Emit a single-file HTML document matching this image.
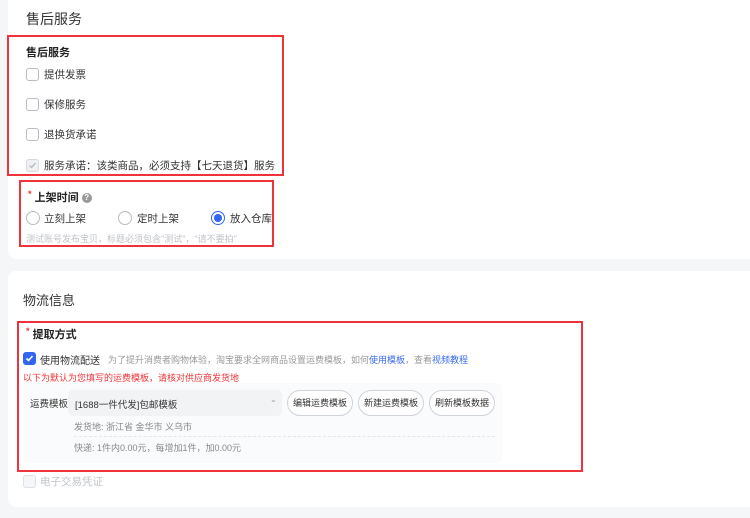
<!DOCTYPE html>
<html><head><meta charset="utf-8"><style>
*{margin:0;padding:0;box-sizing:border-box}
body{width:750px;height:518px;background:#f5f6f8;position:relative;overflow:hidden;font-family:"Liberation Sans","Noto Sans CJK SC",sans-serif;color:#333}
.a{position:absolute;white-space:nowrap}
.card{position:absolute;background:#fff;border-radius:8px}
.rb{position:absolute;border:2px solid #f0333a}
.cb{position:absolute;width:13px;height:13px;border:1px solid #b8bcc4;border-radius:3px;background:#fff}
.rd{position:absolute;width:14px;height:14px;border:1px solid #b8bcc4;border-radius:50%;background:#fff}
.t11{font-size:10.5px;color:#333}
.btn{position:absolute;top:390px;height:26px;width:66px;border:1px solid #cfd3da;border-radius:13px;background:#fff;font-size:9px;text-align:center;line-height:24px;color:#333}
</style></head><body>
<div class="card" style="left:8px;top:-10px;width:760px;height:269px"></div>
<div class="card" style="left:8px;top:271px;width:760px;height:236px"></div>

<div class="a" style="left:26px;top:9px;font-size:14px;color:#333">售后服务</div>
<div class="rb" style="left:7px;top:35px;width:277px;height:141px"></div>
<div class="a" style="left:26px;top:44px;font-size:11px;font-weight:bold;color:#222">售后服务</div>
<div class="cb" style="left:26px;top:68px"></div><div class="a t11" style="left:44px;top:67px">提供发票</div>
<div class="cb" style="left:26px;top:98px"></div><div class="a t11" style="left:44px;top:97px">保修服务</div>
<div class="cb" style="left:26px;top:128px"></div><div class="a t11" style="left:44px;top:127px">退换货承诺</div>
<div class="cb" style="left:26px;top:159px;background:#f0f1f3;border-color:#d6d9de"><svg width="11" height="11" style="position:absolute;left:0;top:0"><path d="M2.5 5.5l2 2 4-4.5" stroke="#b8bcc4" stroke-width="1.4" fill="none"/></svg></div>
<div class="a t11" style="left:44px;top:158px">服务承诺：该类商品，必须支持【七天退货】服务</div>

<div class="rb" style="left:19px;top:180px;width:255px;height:67px"></div>
<div class="a" style="left:28px;top:189px;font-size:11px;font-weight:bold;color:#222"><span style="color:#f0333a;font-size:9px;vertical-align:top">*</span> 上架时间 <span style="display:inline-block;width:10px;height:10px;border-radius:50%;background:#999;color:#fff;font-size:8px;line-height:10px;text-align:center;vertical-align:middle">?</span></div>
<div class="rd" style="left:26px;top:211px"></div><div class="a t11" style="left:44px;top:211px">立刻上架</div>
<div class="rd" style="left:118px;top:211px"></div><div class="a t11" style="left:137px;top:211px">定时上架</div>
<div class="rd" style="left:211px;top:211px;border-color:#3366f0"><div style="position:absolute;left:2px;top:2px;width:8px;height:8px;border-radius:50%;background:#3366f0"></div></div>
<div class="a t11" style="left:230px;top:211px">放入仓库</div>
<div class="a" style="left:26px;top:232px;font-size:9px;color:#c0c3c8">测试账号发布宝贝，标题必须包含"测试"，"请不要拍"</div>

<div class="a" style="left:23px;top:290px;font-size:13px;color:#333">物流信息</div>
<div class="rb" style="left:17px;top:321px;width:566px;height:151px"></div>
<div class="a" style="left:26px;top:326px;font-size:11px;font-weight:bold;color:#222"><span style="color:#f0333a;font-size:9px;vertical-align:top">*</span> 提取方式</div>
<div class="cb" style="left:23px;top:352px;background:#3366f0;border-color:#3366f0"><svg width="11" height="11" style="position:absolute;left:0;top:0"><path d="M2.5 5.5l2 2 4-4.5" stroke="#fff" stroke-width="1.6" fill="none"/></svg></div>
<div class="a" style="left:40px;top:352px;font-size:10px;color:#333">使用物流配送</div>
<div class="a" style="left:108px;top:353px;font-size:9px;color:#999">为了提升消费者购物体验，淘宝要求全网商品设置运费模板，如何<span style="color:#3b6cf0">使用模板</span>，查看<span style="color:#3b6cf0">视频教程</span></div>
<div class="a" style="left:23px;top:371px;font-size:9px;color:#f0333a">以下为默认为您填写的运费模板，请核对供应商发货地</div>
<div style="position:absolute;left:23px;top:383px;width:479px;height:80px;background:#fafbfc;border-radius:6px"></div>
<div class="a" style="left:30px;top:396px;font-size:9.5px;color:#333">运费模板 <span style="color:#f0333a">*</span></div>
<div style="position:absolute;left:68px;top:390px;width:214px;height:26px;background:#f2f3f5;border-radius:5px"></div>
<div class="a" style="left:75px;top:397px;font-size:9.5px;color:#333">[1688一件代发]包邮模板</div>
<div class="a" style="left:270px;top:395px;font-size:8px;color:#999">⌄</div>
<div class="btn" style="left:287px">编辑运费模板</div>
<div class="btn" style="left:358px">新建运费模板</div>
<div class="btn" style="left:429px">刷新模板数据</div>
<div class="a" style="left:74px;top:420px;font-size:9px;color:#888">发货地: 浙江省 金华市 义乌市</div>
<div style="position:absolute;left:74px;top:436px;width:421px;border-top:1px dashed #e3e5e8"></div>
<div class="a" style="left:74px;top:441px;font-size:9px;color:#888">快递: 1件内0.00元，每增加1件，加0.00元</div>
<div class="cb" style="left:23px;top:475px;background:#f5f6f8;border-color:#dcdfe4"></div>
<div class="a" style="left:40px;top:474px;font-size:10.5px;color:#c0c3c8">电子交易凭证</div>
</body></html>
